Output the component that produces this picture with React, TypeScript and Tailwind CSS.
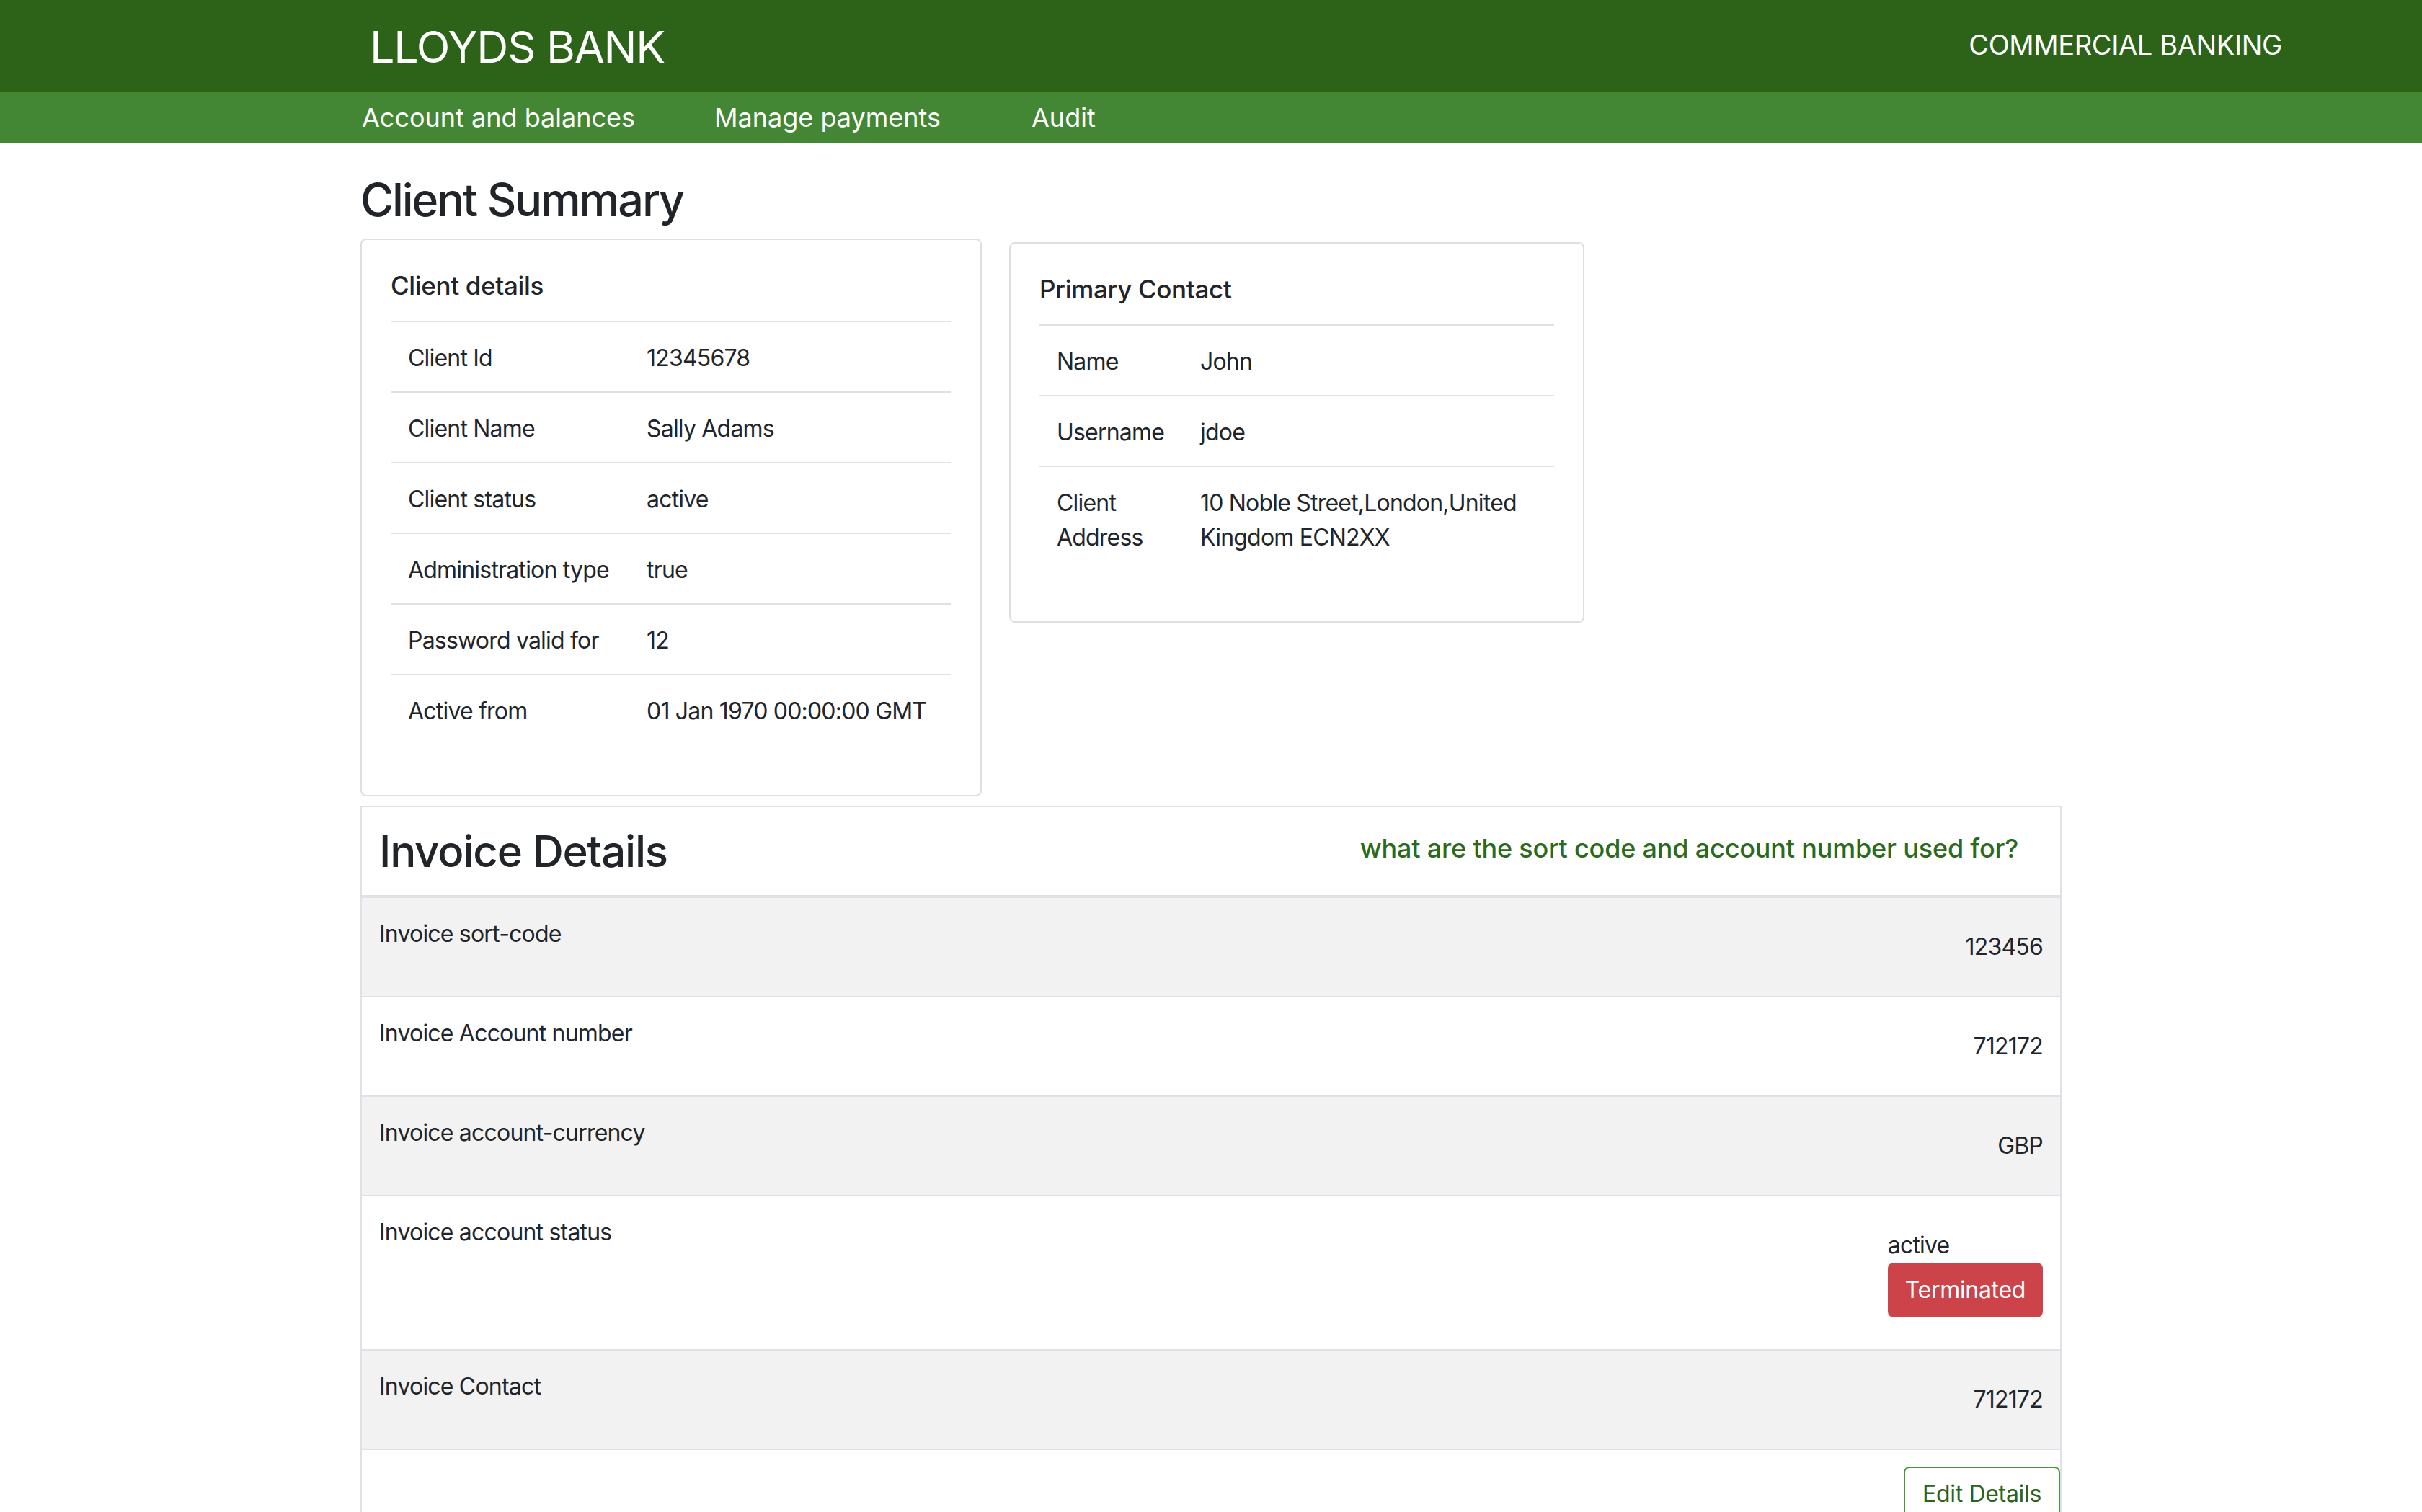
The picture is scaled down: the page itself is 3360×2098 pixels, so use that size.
import React from "react";

type Row = { label: string; value: React.ReactNode };

const clientDetails: Row[] = [
  { label: "Client Id", value: "12345678" },
  { label: "Client Name", value: "Sally Adams" },
  { label: "Client status", value: "active" },
  { label: "Administration type", value: "true" },
  { label: "Password valid for", value: "12" },
  { label: "Active from", value: "01 Jan 1970 00:00:00 GMT" },
];

const primaryContact: Row[] = [
  { label: "Name", value: "John" },
  { label: "Username", value: "jdoe" },
  { label: "Client Address", value: "10 Noble Street,London,United Kingdom ECN2XX" },
];

function DetailsCard({
  title,
  rows,
  labelWidth,
  className,
}: {
  title: string;
  rows: Row[];
  labelWidth: string;
  className: string;
}) {
  return (
    <div className={`border-2 border-[#dfdfdf] rounded-[8px] bg-white px-[40px] pt-[42px] pb-[40px] ${className}`}>
      <h5 className="text-[35px] leading-[42px] font-medium mb-[28px] text-[#212529] tracking-[-0.01em]">{title}</h5>
      <table className="w-full table-fixed mb-[30px] text-[32px] leading-[48px] text-[#212529] tracking-[-0.025em]">
        <colgroup>
          <col className={labelWidth} />
          <col />
        </colgroup>
        <tbody>
          {rows.map((r) => (
            <tr key={r.label} className="border-t-2 border-[#dee2e6]">
              <td className="px-[24px] pt-[26px] pb-[22px] align-top">{r.label}</td>
              <td className="px-[24px] pt-[26px] pb-[22px] align-top">{r.value}</td>
            </tr>
          ))}
        </tbody>
      </table>
    </div>
  );
}

function InvoiceRow({
  label,
  children,
  shaded,
}: {
  label: string;
  children: React.ReactNode;
  shaded?: boolean;
}) {
  return (
    <div
      className={`flex justify-between items-start px-[24px] border-b-2 border-[#dee2e6] ${
        shaded ? "bg-[#f2f2f2]" : "bg-white"
      }`}
    >
      <div className="pt-[26px]">{label}</div>
      <div className="pt-[44px] pb-[44px]">{children}</div>
    </div>
  );
}

export default function App() {
  return (
    <div className="min-h-screen bg-white font-['Inter',sans-serif] text-[#212529]">
      {/* top bar */}
      <header className="h-[128px] bg-[#2c6318] flex items-center justify-between pl-[513px] pr-[194px] text-white">
        <div className="text-[61px] leading-none mt-[3px] tracking-[-0.02em]">LLOYDS BANK</div>
        <div className="text-[38px] leading-none mb-[4px] tracking-[-0.01em]">COMMERCIAL BANKING</div>
      </header>
      <nav className="h-[70px] bg-[#438734] flex items-center pl-[502px] text-white text-[36px] leading-none">
        <a className="w-[489px]">Account and balances</a>
        <a className="w-[440px]">Manage payments</a>
        <a>Audit</a>
      </nav>

      <main className="w-[2360px] mx-auto">
        <h2 className="text-[63px] leading-[79px] font-medium mt-[40px] mb-[14px] tracking-[-0.035em]">
          Client Summary
        </h2>

        <div className="flex items-start gap-[38px]">
          <DetailsCard title="Client details" rows={clientDetails} labelWidth="w-[331px]" className="w-[862px]" />
          <DetailsCard
            title="Primary Contact"
            rows={primaryContact}
            labelWidth="w-[199px]"
            className="w-[798px] mt-[5px]"
          />
        </div>

        <section className="mt-[13px] border-2 border-b-0 border-[#dee2e6] text-[32px] leading-[48px] tracking-[-0.025em]">
          <div className="flex items-center justify-between pl-[24px] pr-[58px] py-[25px] border-b-4 border-[#dee2e6]">
            <h2 className="text-[60px] leading-[72px] font-medium tracking-[-0.02em]">Invoice Details</h2>
            <a className="text-[36px] leading-[54px] text-[#2b6a1b] font-medium mb-[8px] tracking-[-0.005em]">
              what are the sort code and account number used for?
            </a>
          </div>

          <InvoiceRow label="Invoice sort-code" shaded>
            123456
          </InvoiceRow>
          <InvoiceRow label="Invoice Account number">712172</InvoiceRow>
          <InvoiceRow label="Invoice account-currency" shaded>
            GBP
          </InvoiceRow>
          <InvoiceRow label="Invoice account status">
            <div className="flex flex-col items-start">
              <span>active</span>
              <button className="h-[76px] px-[24px] rounded-[8px] bg-[#cc4349] text-white text-[32px] tracking-[-0.01em]">
                Terminated
              </button>
            </div>
          </InvoiceRow>
          <InvoiceRow label="Invoice Contact" shaded>
            712172
          </InvoiceRow>

          <div className="flex justify-end pt-[23px] pb-[24px]">
            <button className="h-[76px] px-[24px] rounded-[8px] border-2 border-[#48953a] text-[#2c6318] text-[32px] tracking-[-0.01em]">
              Edit Details
            </button>
          </div>
        </section>
      </main>
    </div>
  );
}
